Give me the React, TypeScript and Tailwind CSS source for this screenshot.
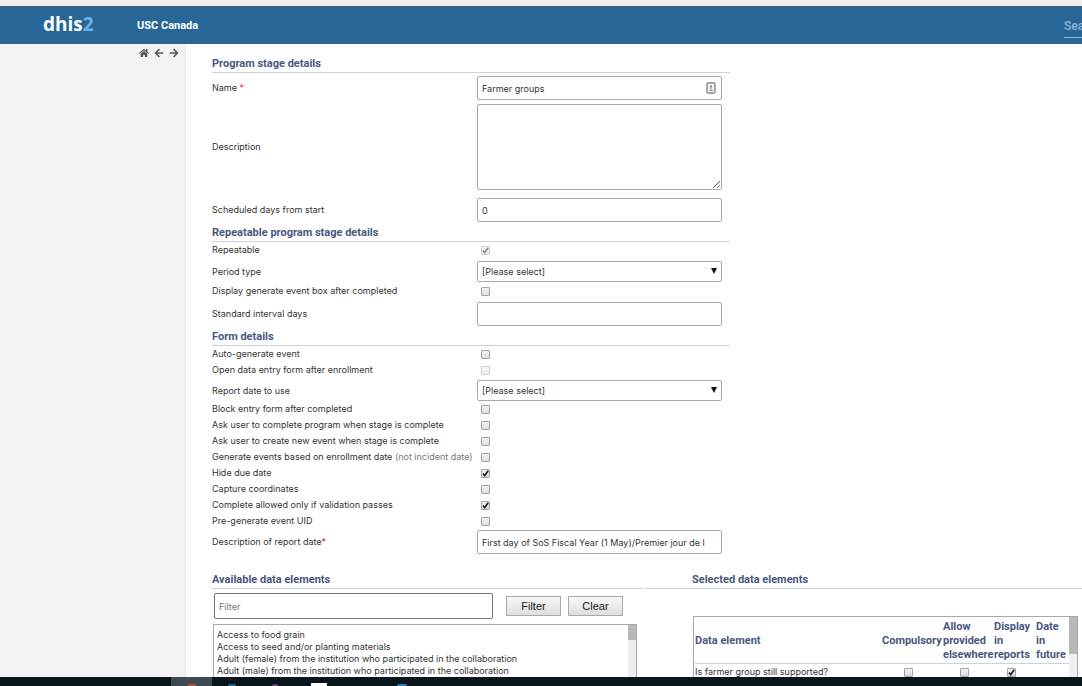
import React from "react";
import { FaArrowLeft, FaArrowRight, FaHome } from "react-icons/fa";
import clsx from "clsx";

const fieldClass =
  "block w-full border border-[#a9a9a9] rounded-[2px] bg-white px-1 text-[9px] text-[#333] outline-none";

const flags = [
  { id: "block", label: "Block entry form after completed" },
  { id: "ask-complete", label: "Ask user to complete program when stage is complete" },
  { id: "ask-create", label: "Ask user to create new event when stage is complete" },
  {
    id: "enrollment-date",
    label: "Generate events based on enrollment date",
    note: "(not incident date)",
  },
  { id: "hide-due", label: "Hide due date", checked: true },
  { id: "coordinates", label: "Capture coordinates" },
  { id: "validation", label: "Complete allowed only if validation passes", checked: true },
  { id: "pre-generate", label: "Pre-generate event UID" },
];

const elements = [
  "Access to food grain",
  "Access to seed and/or planting materials",
  "Adult (female) from the institution who participated in the collaboration",
  "Adult (male) from the institution who participated in the collaboration",
];

type CheckboxProps = {
  id?: string;
  label?: string;
  checked?: boolean;
  disabled?: boolean;
};

const Checkbox = ({ id, label, checked, disabled }: CheckboxProps) => (
  <span className={clsx("relative inline-block size-[9px]", disabled && "opacity-50")}>
    <input
      id={id}
      type="checkbox"
      aria-label={label}
      defaultChecked={checked}
      disabled={disabled}
      className="peer block size-[9px] appearance-none rounded-[1px] border border-[#a3a3a3] bg-linear-to-b from-[#f2f2f2] to-[#dcdcdc]"
    />
    <svg
      viewBox="0 0 9 9"
      className="pointer-events-none absolute inset-0 hidden size-[9px] peer-checked:block"
    >
      <path d="M2 4.6 L3.8 6.6 L7.2 1.8" fill="none" stroke="#222" strokeWidth="1.7" />
    </svg>
  </span>
);

const Heading = ({ children }: { children: React.ReactNode }) => (
  <h2 className="border-b border-[#cbd3e0] pt-0.5 font-[Roboto,sans-serif] text-[11px] leading-[17px] font-bold text-[#48577f]">
    {children}
  </h2>
);

type RowProps = {
  id: string;
  label: React.ReactNode;
  className?: string;
  children: React.ReactNode;
};

const Row = ({ id, label, className, children }: RowProps) => (
  <div className={clsx("flex items-center pr-2", className)}>
    <label htmlFor={id} className="w-[265px] shrink-0 text-[9px] leading-4 whitespace-nowrap">
      {label}
    </label>
    <div className="relative min-w-0 flex-1">{children}</div>
  </div>
);

const CheckRow = ({
  id,
  label,
  note,
  checked,
  disabled,
}: {
  id: string;
  label: string;
  note?: string;
  checked?: boolean;
  disabled?: boolean;
}) => (
  <Row
    id={id}
    className="h-4"
    label={
      <>
        {label} {note && <span className="text-[#777]">{note}</span>}
      </>
    }
  >
    <span className="flex pl-1">
      <Checkbox id={id} checked={checked} disabled={disabled} />
    </span>
  </Row>
);

const Dropdown = ({ id }: { id: string }) => (
  <>
    <select id={id} className={clsx(fieldClass, "h-[21px] appearance-none")}>
      <option>[Please select]</option>
    </select>
    <svg
      viewBox="0 0 6 6"
      className="pointer-events-none absolute top-[7px] right-[5px] size-[6px]"
    >
      <path d="M0 0 H6 L3 6 Z" fill="#111" />
    </svg>
  </>
);

const Header = () => (
  <header className="flex h-[38px] shrink-0 items-center overflow-hidden border-y border-[#3d5f7c] bg-[#276696] pl-[43px]">
    <a
      href="#"
      className="w-[94px] shrink-0 pb-0.5 font-['Open_Sans',sans-serif] text-[19px] leading-6 font-bold text-white"
    >
      dhis<span className="text-[#6bb2ea]">2</span>
    </a>
    <span className="pt-0.5 font-[Roboto,sans-serif] text-[11px] font-bold text-white">
      USC Canada
    </span>
    <input
      aria-label="Search apps"
      placeholder="Search apps"
      className="mt-0.5 -mr-[142px] ml-auto h-6 w-40 shrink-0 border-b border-[#8fb9da] font-[Roboto,sans-serif] text-[12px] font-medium outline-none placeholder:text-[#8fb4d0]"
    />
  </header>
);

const Sidebar = () => (
  <aside className="flex w-[186px] shrink-0 items-start justify-end gap-[5px] border-r border-[#e8e8e8] bg-[#f3f3f3] pt-1 pr-[6px] text-[10px] text-[#555]">
    <a href="#" aria-label="Home">
      <FaHome />
    </a>
    <a href="#" aria-label="Back">
      <FaArrowLeft />
    </a>
    <a href="#" aria-label="Forward">
      <FaArrowRight />
    </a>
  </aside>
);

const StageForm = () => (
  <form className="max-w-[518px]">
    <Heading>Program stage details</Heading>
    <Row
      id="name"
      className="pt-[3px] pb-1"
      label={
        <>
          Name <span className="text-red-500">*</span>
        </>
      }
    >
      <input id="name" defaultValue="Farmer groups" className={clsx(fieldClass, "h-6 pr-6")} />
      <svg
        viewBox="0 0 10 12"
        className="pointer-events-none absolute top-[6px] right-[6px] h-3 w-[10px]"
      >
        <rect x="1" y="1" width="8" height="10" rx="1" fill="#f4f4f4" stroke="#888" strokeWidth="1.4" />
        <circle cx="5" cy="4.3" r="1.1" fill="#888" />
        <path d="M5 5 V7.5 M3.2 8.3 H6.8" stroke="#888" />
      </svg>
    </Row>
    <Row id="description" className="pb-2" label="Description">
      <textarea id="description" className={clsx(fieldClass, "h-[86px]")} />
    </Row>
    <Row id="scheduled" label="Scheduled days from start">
      <input id="scheduled" defaultValue="0" className={clsx(fieldClass, "h-6")} />
    </Row>

    <Heading>Repeatable program stage details</Heading>
    <CheckRow id="repeatable" label="Repeatable" checked disabled />
    <Row id="period" className="pt-[3px] pb-px" label="Period type">
      <Dropdown id="period" />
    </Row>
    <CheckRow id="event-box" label="Display generate event box after completed" />
    <Row id="interval" className="pt-[3px]" label="Standard interval days">
      <input id="interval" className={clsx(fieldClass, "h-6")} />
    </Row>

    <Heading>Form details</Heading>
    <CheckRow id="auto-generate" label="Auto-generate event" />
    <CheckRow id="open-form" label="Open data entry form after enrollment" disabled />
    <Row id="report-date" className="pt-0.5" label="Report date to use">
      <Dropdown id="report-date" />
    </Row>
    {flags.map((flag) => (
      <CheckRow key={flag.id} {...flag} />
    ))}
    <Row
      id="report-description"
      className="pt-px"
      label={
        <>
          Description of report date<span className="text-red-600">*</span>
        </>
      }
    >
      <input
        id="report-description"
        defaultValue="First day of SoS Fiscal Year (1 May)/Premier jour de l"
        className={clsx(fieldClass, "h-6")}
      />
    </Row>
  </form>
);

const buttonClass =
  "h-5 w-[55px] border border-[#aaa] bg-linear-to-b from-[#f8f8f8] to-[#dedede] font-['Liberation_Sans',Arial,sans-serif] text-[11px] leading-none text-[#222]";

const Available = () => (
  <section className="w-[431px] shrink-0">
    <Heading>Available data elements</Heading>
    <div className="flex items-center gap-[7px] pt-1 pl-0.5">
      <input
        aria-label="Filter"
        placeholder="Filter"
        className="mr-[6px] h-[26px] w-[279px] rounded-[2px] border border-[#777] px-1 text-[9px] placeholder:text-[#777]"
      />
      <button type="button" className={buttonClass}>
        Filter
      </button>
      <button type="button" className={buttonClass}>
        Clear
      </button>
    </div>
    <div className="mt-[5px] ml-px flex h-[200px] w-[424px] border border-[#a9a9a9]">
      <select
        multiple
        aria-label="Available data elements"
        className="min-w-0 flex-1 appearance-none overflow-hidden pt-1 pl-[3px] text-[9px] text-[#333] outline-none"
      >
        {elements.map((name) => (
          <option key={name} className="h-3 p-0 leading-3">
            {name}
          </option>
        ))}
      </select>
      <div className="w-2 bg-[#eee]">
        <div className="h-[15px] bg-[#b8b8b8]" />
      </div>
    </div>
  </section>
);

const Selected = () => (
  <section className="ml-0.5 min-w-0 flex-1">
    <div className="border-b border-[#cbd3e0] pl-[47px]">
      <h2 className="pt-0.5 font-[Roboto,sans-serif] text-[11px] leading-[17px] font-bold text-[#48577f]">
        Selected data elements
      </h2>
    </div>
    <div className="mt-[27px] mr-1 ml-12 flex h-[200px] border border-[#a9a9a9]">
      <div className="min-w-0 flex-1 pl-px">
        <table className="w-full table-fixed text-[11px] leading-[14px]">
          <thead>
            <tr className="border-b border-[#cbd3e0] text-left font-[Roboto,sans-serif] text-[#48577f] [&>th]:pt-[3px] [&>th]:pb-px [&>th]:font-bold">
              <th>Data element</th>
              <th className="w-[61px]">Compulsory</th>
              <th className="w-[51px]">Allow provided elsewhere</th>
              <th className="w-[42px]">Display in reports</th>
              <th className="w-[33px]">Date in future</th>
            </tr>
          </thead>
          <tbody>
            <tr className="text-[9px] leading-4 text-[#333] [&>td]:align-middle">
              <td>Is farmer group still supported?</td>
              <td>
                <span className="flex justify-center pr-2">
                  <Checkbox label="Compulsory" />
                </span>
              </td>
              <td>
                <span className="flex justify-center pr-2">
                  <Checkbox label="Allow provided elsewhere" />
                </span>
              </td>
              <td>
                <span className="flex justify-center pr-2">
                  <Checkbox label="Display in reports" checked />
                </span>
              </td>
              <td />
            </tr>
          </tbody>
        </table>
      </div>
      <div className="w-2 bg-[#f0f0f0]">
        <div className="h-[37px] bg-[#b8b8b8]" />
      </div>
    </div>
  </section>
);

const Taskbar = () => (
  <footer className="flex h-[9px] shrink-0 items-end overflow-hidden bg-[#08151b] pl-[171px]">
    <div className="flex h-full w-[41px] items-end justify-center bg-[#3f4a50]">
      <span className="h-[2px] w-2 rounded-t-full bg-[#b5503a]" />
    </div>
    <span className="ml-4 h-[2px] w-2 rounded-t-full bg-[#1d5f99]" />
    <span className="ml-9 h-[2px] w-[6px] rounded-t-full bg-[#6d4470]" />
    <span className="ml-[33px] h-[3px] w-4 bg-white" />
    <span className="ml-[70px] h-[2px] w-[10px] rounded-t-full bg-[#1f84b5]" />
  </footer>
);

export default function App() {
  return (
    <div className="flex h-screen flex-col overflow-hidden bg-white font-[Inter,Arial,sans-serif] text-[#333]">
      <div className="h-[6px] shrink-0 bg-[#f1f0ef]" />
      <Header />
      <div className="flex min-h-0 flex-1 overflow-hidden">
        <Sidebar />
        <main className="min-w-0 flex-1 pt-[9px] pl-[26px]">
          <StageForm />
          <div className="mt-[15px] flex">
            <Available />
            <Selected />
          </div>
        </main>
      </div>
      <Taskbar />
    </div>
  );
}
